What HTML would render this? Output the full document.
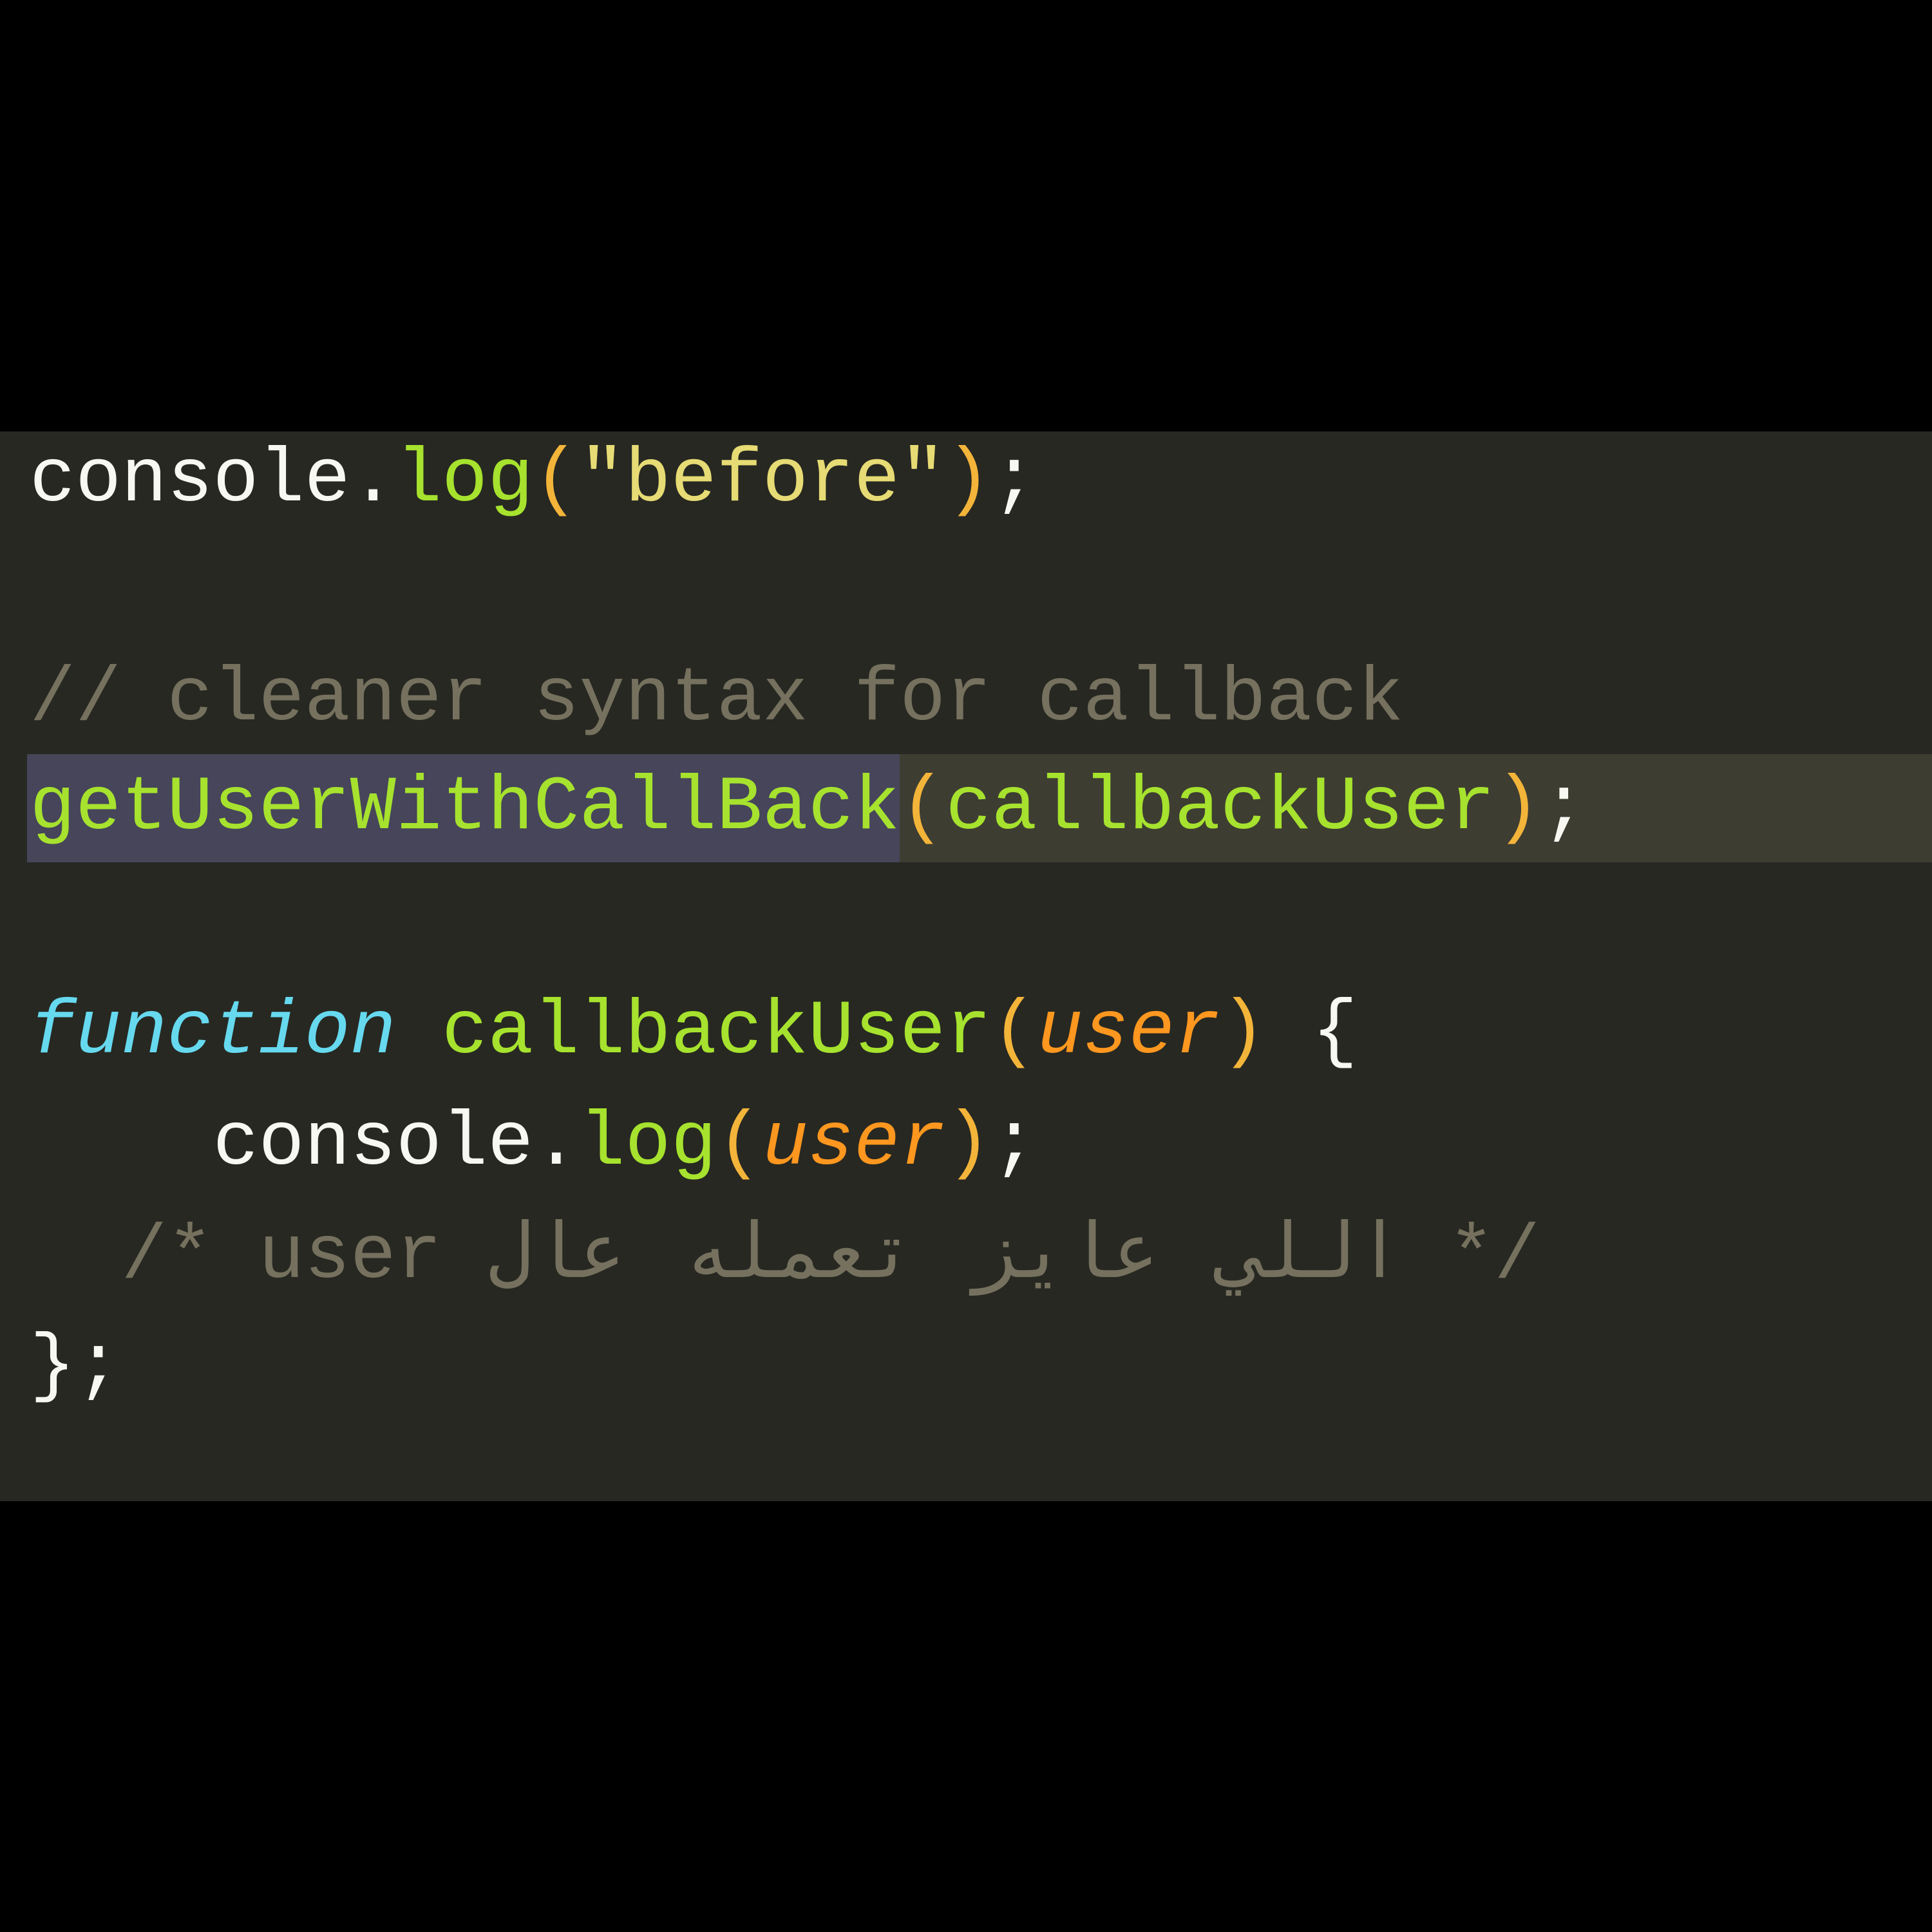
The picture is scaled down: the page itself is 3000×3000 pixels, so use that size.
<!DOCTYPE html>
<html><head><meta charset="utf-8"><style>
html,body{margin:0;padding:0;background:#000;width:3000px;height:3000px;overflow:hidden}
#ed{position:absolute;left:0;top:670px;width:3000px;height:1661px;background:#272822}
.l{position:absolute;left:46px;height:172px;line-height:172px;font-family:"Liberation Mono","DejaVu Sans Mono",monospace;font-size:118.5px;color:#f8f8f2;white-space:pre}
.g{color:#a6e22e}.y{color:#e6db74}.p{color:#f3b43a}.c{color:#75715e}.k{color:#66d9ef;font-style:italic}.o{color:#fd971f;font-style:italic}
#hl{position:absolute;left:42px;top:1171px;width:2958px;height:168px;background:#3e3d32}
#sel{position:absolute;left:42px;top:1171px;width:1355px;height:168px;background:#46455a}
</style></head><body>
<div id="ed"></div>
<div id="hl"></div><div id="sel"></div>
<div class="l" style="top:660px">console.<span class="g">log</span><span class="p">(</span><span class="y">"before"</span><span class="p">)</span>;</div>
<div class="l c" style="top:1000px">// cleaner syntax for callback</div>
<div class="l" style="top:1169px"><span class="g">getUserWithCallBack</span><span class="p">(</span><span class="g">callbackUser</span><span class="p">)</span>;</div>
<div class="l" style="top:1517px"><span class="k">function</span> <span class="g">callbackUser</span><span class="p">(</span><span class="o">user</span><span class="p">)</span> {</div>
<div class="l" style="top:1690px">    console.<span class="g">log</span><span class="p">(</span><span class="o">user</span><span class="p">)</span>;</div>
<div class="l c" style="top:1866px">  /* user <span dir="rtl" style="unicode-bidi:embed;word-spacing:22px;letter-spacing:2px">اللي عايز تعمله عال</span> */</div>
<div class="l" style="top:2036px">};</div>
</body></html>
